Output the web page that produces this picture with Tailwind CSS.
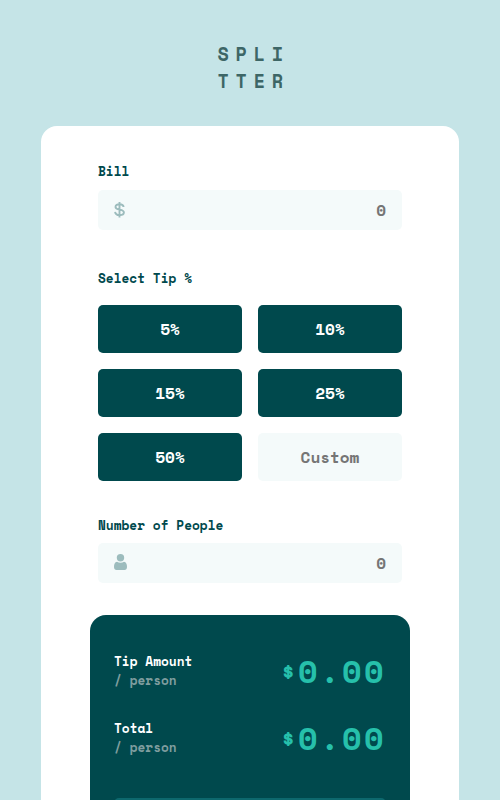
<!DOCTYPE html>
<html lang="en">
<head>
<meta charset="utf-8">
<title>Splitter</title>
<script src="https://cdn.jsdelivr.net/npm/@tailwindcss/browser@4"></script>
</head>
<body class="h-[800px] overflow-hidden bg-[#c5e4e7] font-['Space_Mono','Liberation_Mono',monospace] font-bold text-[#00494d]">
<header class="flex h-[126px] flex-col items-center pt-[41px] text-[18.5px] leading-[27px] tracking-[6.8px] text-[#3d6666]">
  <h1 class="w-[65px] whitespace-nowrap"><span class="block">SPLI</span><span class="block">TTER</span></h1>
</header>
<main class="mx-[41px] flex h-[674px] flex-col overflow-hidden rounded-t-[16px] bg-white px-[49px] pt-9">
  <form class="shrink-0 px-2">
    <label class="block h-[28px] text-[12.8px] leading-[19px]">Bill</label>
    <div class="flex h-10 items-center justify-between rounded-[5px] bg-[#f4fafa] px-4 text-[#757575]">
      <svg class="h-[17px] w-[11px] -translate-y-px" viewBox="0 0 11 17" fill="none" stroke="#9cbcbd" stroke-width="1.9"><path d="M5.500 1v15.500M9.600 6C9.400 4.100 7.900 3.200 5.600 3.200 3.200 3.200 1.500 4.200 1.500 5.900c0 3.700 8.400 1.700 8.400 5.400 0 1.800-1.700 2.900-4.300 2.900-2.600 0-4.300-1.200-4.500-3.300"/></svg>
      <span class="text-[16px] leading-6">0</span>
    </div>
    <h2 class="mt-[39px] h-[36px] text-[12.8px] leading-[19px]">Select Tip %</h2>
    <div class="grid grid-cols-2 gap-4 text-[16px] leading-6 text-white">
      <button type="button" class="h-12 rounded-[5px] bg-[#00494d]">5%</button>
      <button type="button" class="h-12 rounded-[5px] bg-[#00494d]">10%</button>
      <button type="button" class="h-12 rounded-[5px] bg-[#00494d]">15%</button>
      <button type="button" class="h-12 rounded-[5px] bg-[#00494d]">25%</button>
      <button type="button" class="h-12 rounded-[5px] bg-[#00494d]">50%</button>
      <div class="flex h-12 items-center justify-center rounded-[5px] bg-[#f4fafa] text-[#757575]">Custom</div>
    </div>
    <label class="mt-[35px] block h-[27px] text-[12.8px] leading-[19px]">Number of People</label>
    <div class="flex h-10 items-center justify-between rounded-[5px] bg-[#f4fafa] px-4 text-[#757575]">
      <svg class="h-4 w-[13px] -translate-y-px" viewBox="0 0 13 16" fill="#9cbcbd"><circle cx="6.500" cy="3.800" r="3.700"/><path d="M3 7.700C4 8.400 5.200 8.700 6.500 8.700S9 8.400 10 7.700C12.200 8 13 10 13 13C13 15 12 16 10.500 16H2.500C1 16 0 15 0 13C0 10 .8 8 3 7.700Z"/></svg>
      <span class="text-[16px] leading-6">0</span>
    </div>
  </form>
  <section class="mt-8 h-[185px] shrink-0 overflow-hidden rounded-t-[16px] bg-[#00494d] px-6 pt-[37px]">
    <div class="flex h-[67px] justify-between">
      <p class="text-[12.8px] leading-[19px] text-white">Tip Amount<span class="block text-[#7f9d9f]">/ person</span></p>
      <p class="flex h-[38px] items-center text-[#26c0ab]"><span class="pt-[2px] text-[22px] leading-[22px]">$</span><span class="ml-[3px] text-[32px] leading-[38px] tracking-[2.4px]">0.00</span></p>
    </div>
    <div class="flex h-[67px] justify-between">
      <p class="text-[12.8px] leading-[19px] text-white">Total<span class="block text-[#7f9d9f]">/ person</span></p>
      <p class="flex h-[38px] items-center text-[#26c0ab]"><span class="pt-[2px] text-[22px] leading-[22px]">$</span><span class="ml-[3px] text-[32px] leading-[38px] tracking-[2.4px]">0.00</span></p>
    </div>
    <button type="button" aria-label="Reset" class="mt-3 block h-12 w-full rounded-[5px] bg-[#0d686d]"></button>
  </section>
</main>
</body>
</html>
